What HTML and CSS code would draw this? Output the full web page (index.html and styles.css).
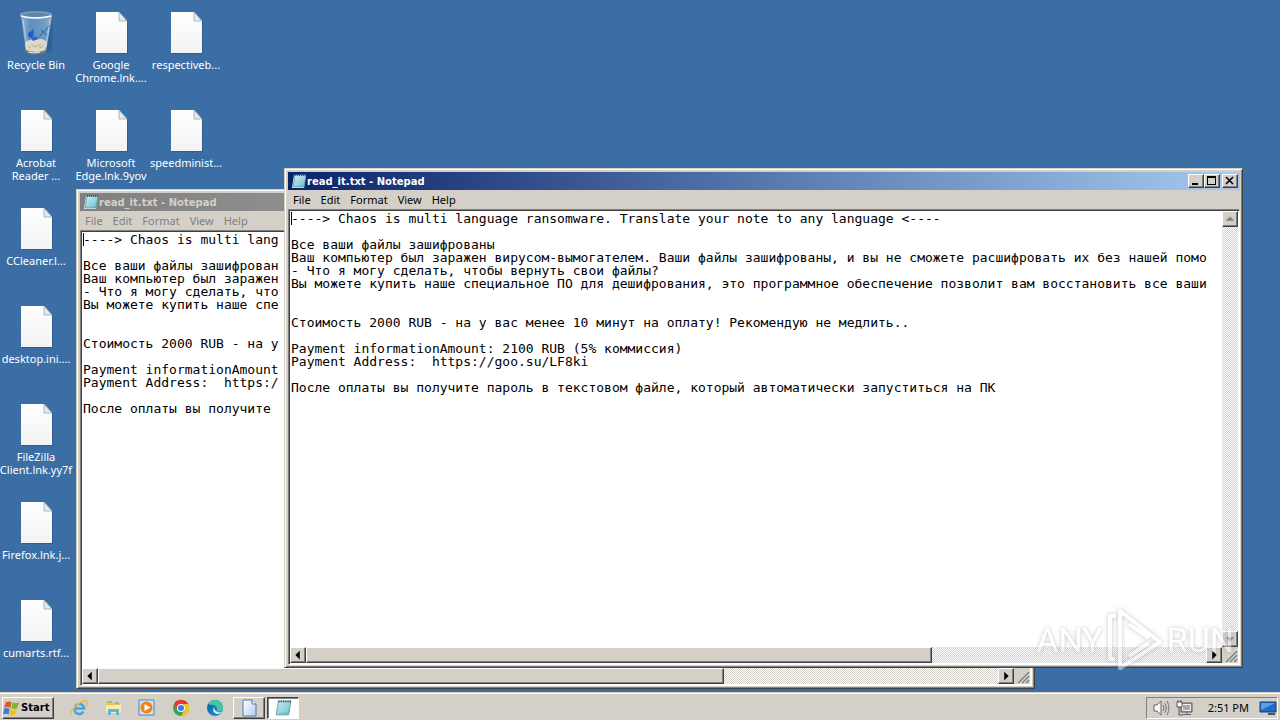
FILE: index.html
```html
<!DOCTYPE html>
<html lang="en">
<head>
<meta charset="utf-8">
<title>Desktop</title>
<link rel="stylesheet" href="styles.css">
</head>
<body>
<svg class="defs" aria-hidden="true">
  <defs>
    <linearGradient id="paper" x1="0" y1="0" x2="0" y2="1"><stop offset="0" stop-color="#fff"/><stop offset="1" stop-color="#f3f3f3"/></linearGradient>
    <linearGradient id="sheet" x1="0" y1="0" x2="1" y2="1"><stop offset="0" stop-color="#fff"/><stop offset="1" stop-color="#b4cdf0"/></linearGradient>
    <linearGradient id="pad" x1="0" y1="0" x2="1" y2="1"><stop offset="0" stop-color="#d9f3f6"/><stop offset="1" stop-color="#5fb3c4"/></linearGradient>
    <linearGradient id="edge" x1="0" y1="0" x2="1" y2="1"><stop offset="0" stop-color="#0c59a4"/><stop offset="1" stop-color="#1ba0d8"/></linearGradient>
    <linearGradient id="glass" x1="0" y1="0" x2="1" y2="0"><stop offset="0" stop-color="#b9cfe2" stop-opacity=".8"/><stop offset=".3" stop-color="#6f9cc9" stop-opacity=".7"/><stop offset=".8" stop-color="#7fa9d0" stop-opacity=".8"/><stop offset="1" stop-color="#a9bccb"/></linearGradient>
  </defs>
  <symbol id="file" viewBox="0 0 34 44">
    <path d="M3 2h23l8 9v32H3z" fill="#204a7a" opacity=".45"/>
    <path d="M2 1h23l8 9v32H2z" fill="url(#paper)"/>
    <path d="M25 1v9h8z" fill="#e6e9ec" stroke="#9aa7b4" stroke-width=".8"/>
  </symbol>
  <symbol id="notepad" viewBox="0 0 16 16">
    <path d="M3 2h12l-2 13H1z" fill="#eefafa"/>
    <path d="M4 2h11l-2 12H2z" fill="url(#pad)" stroke="#4e95a5" stroke-width=".7"/>
    <path d="M5 5h8M5 7h8M4 9h8M4 11h8" stroke="#a8dbe2" stroke-width=".7"/>
    <path d="M4 2h11" stroke="#465b60" stroke-width="2" stroke-dasharray="1 1"/>
  </symbol>
  <symbol id="left" viewBox="0 0 16 16"><path d="M10 3v10L5 8z"/></symbol>
  <symbol id="right" viewBox="0 0 16 16"><path d="M6 3v10l5-5z"/></symbol>
  <symbol id="up" viewBox="0 0 16 16"><path d="M3 10h10L8 5z"/></symbol>
  <symbol id="down" viewBox="0 0 16 16"><path d="M3 6h10l-5 5z"/></symbol>
  <symbol id="grip" viewBox="0 0 16 16">
    <path d="M3 15L15 3M7 15l8-8M11 15l4-4" stroke="#fff" stroke-width="1"/>
    <path d="M4 15L15 4M8 15l7-7M12 15l3-3" stroke="#808080" stroke-width="1.6"/>
  </symbol>
</svg>

<main class="desktop">
  <div class="icons">
    <div class="column">
      <div class="shortcut">
        <svg class="art" viewBox="3 3 34 44">
          <path d="M29 38l8-24-1 29-8 3z" fill="#24507f" opacity=".4"/>
          <path d="M5 7l5 37q10 4 20 0l6-37z" fill="url(#glass)"/>
          <path d="M9 35q4-5 10-3 9-3 12 3l-2 8q-9 5-19 0z" fill="#ded8c9"/>
          <path d="M15 36l4 3 6-3M12 38l3 2M23 40l5-2" stroke="#b5af9f" fill="none"/>
          <path d="M17 20q2 8-2 10-5-1-2-6 3 0 4-4z" fill="#1b5dcc"/>
          <path d="M15 30q6-4 7 1l-5 2z" fill="#2b66c4"/>
          <path d="M34 17L23 29M25 22l6 5" stroke="#4474a8" stroke-width="1.2" fill="none"/>
          <path d="M10 42q10 4 20 0v3q-10 3-20 0z" fill="#77746a"/>
          <path d="M12 44q7 2 12 0" stroke="#eee" fill="none"/>
          <ellipse cx="20" cy="7" rx="15.500" ry="3" fill="#5687b8" stroke="#8e9ca8" stroke-width="1.500"/>
          <path d="M5 8q14 4 30 0" stroke="#fff" stroke-width="1.5" fill="none"/>
          <path d="M7 12l4 28M34 12l-4 27" stroke="#d7e4ef" opacity=".6"/>
        </svg>
        <span class="label">Recycle Bin</span>
      </div>
      <div class="shortcut"><svg class="art"><use href="#file"/></svg><span class="label">Acrobat<br>Reader ...</span></div>
      <div class="shortcut"><svg class="art"><use href="#file"/></svg><span class="label">CCleaner.l...</span></div>
      <div class="shortcut"><svg class="art"><use href="#file"/></svg><span class="label">desktop.ini....</span></div>
      <div class="shortcut"><svg class="art"><use href="#file"/></svg><span class="label">FileZilla<br>Client.lnk.yy7f</span></div>
      <div class="shortcut"><svg class="art"><use href="#file"/></svg><span class="label">Firefox.lnk.j...</span></div>
      <div class="shortcut"><svg class="art"><use href="#file"/></svg><span class="label">cumarts.rtf...</span></div>
    </div>
    <div class="column">
      <div class="shortcut"><svg class="art"><use href="#file"/></svg><span class="label">Google<br>Chrome.lnk....</span></div>
      <div class="shortcut"><svg class="art"><use href="#file"/></svg><span class="label">Microsoft<br>Edge.lnk.9yov</span></div>
    </div>
    <div class="column">
      <div class="shortcut"><svg class="art"><use href="#file"/></svg><span class="label">respectiveb...</span></div>
      <div class="shortcut"><svg class="art"><use href="#file"/></svg><span class="label">speedminist...</span></div>
    </div>
  </div>

  <section class="window window-back" aria-hidden="true">
    <header class="titlebar">
      <svg class="icon16"><use href="#notepad"/></svg>
      <h2 class="title">read_it.txt - Notepad</h2>
    </header>
    <nav class="menu"><button>File</button><button>Edit</button><button>Format</button><button>View</button><button>Help</button></nav>
    <div class="editor">
      <div class="note">----&gt; Chaos is multi lang

Все ваши файлы зашифрован
Ваш компьютер был заражен
- Что я могу сделать, что
Вы можете купить наше спе


Стоимость 2000 RUB - на у

Payment informationAmount
Payment Address:  https:/

После оплаты вы получите</div>
      <div class="track-y"></div>
      <div class="track-x"><button class="arrow" aria-label="Scroll left"><svg><use href="#left"/></svg></button><span class="thumb"></span><button class="arrow" aria-label="Scroll right"><svg><use href="#right"/></svg></button></div>
      <svg class="corner"><use href="#grip"/></svg>
    </div>
  </section>

  <section class="window window-front">
    <header class="titlebar">
      <svg class="icon16"><use href="#notepad"/></svg>
      <h1 class="title">read_it.txt - Notepad</h1>
      <button class="ctl" aria-label="Minimize"><svg viewBox="0 0 12 10"><path d="M2 7h6v2H2z"/></svg></button>
      <button class="ctl" aria-label="Maximize"><svg viewBox="0 0 12 10"><path d="M1 0h9v9H1zM2 2v6h7V2z" fill-rule="evenodd"/></svg></button>
      <button class="ctl ctl-close" aria-label="Close"><svg viewBox="0 0 12 10"><path d="M2 1l7 7M9 1L2 8" stroke="#000" stroke-width="1.6"/></svg></button>
    </header>
    <nav class="menu"><button>File</button><button>Edit</button><button>Format</button><button>View</button><button>Help</button></nav>
    <div class="editor">
      <div class="note">----&gt; Chaos is multi language ransomware. Translate your note to any language &lt;----

Все ваши файлы зашифрованы
Ваш компьютер был заражен вирусом-вымогателем. Ваши файлы зашифрованы, и вы не сможете расшифровать их без нашей помо
- Что я могу сделать, чтобы вернуть свои файлы?
Вы можете купить наше специальное ПО для дешифрования, это программное обеспечение позволит вам восстановить все ваши


Стоимость 2000 RUB - на у вас менее 10 минут на оплату! Рекомендую не медлить..

Payment informationAmount: 2100 RUB (5% коммиссия)
Payment Address:  https://goo.su/LF8ki

После оплаты вы получите пароль в текстовом файле, который автоматически запуститься на ПК</div>
      <div class="track-y"><button class="arrow" disabled aria-label="Scroll up"><svg><use href="#up"/></svg></button><button class="arrow" disabled aria-label="Scroll down"><svg><use href="#down"/></svg></button></div>
      <div class="track-x"><button class="arrow" aria-label="Scroll left"><svg><use href="#left"/></svg></button><span class="thumb"></span><button class="arrow" aria-label="Scroll right"><svg><use href="#right"/></svg></button></div>
      <svg class="corner"><use href="#grip"/></svg>
    </div>
  </section>

  <div class="watermark">
    <span>ANY</span>
    <svg viewBox="0 0 56 64"><path d="M9 8H3v43h5M13 3v57l40-26zM22 16l20 14M22 48l20-13" fill="none" stroke="#fff" stroke-width="4" stroke-linejoin="round"/></svg>
    <span>RUN</span>
  </div>
</main>

<footer class="taskbar">
  <button class="start">
    <svg viewBox="0 0 18 16">
      <path d="M3 2q3-2 6 0L8 8Q5 6 1 8z" fill="#e8532a"/><path d="M10 2q3 2 7 0l-2 6q-3 2-6 0z" fill="#78b833"/>
      <path d="M1 9q3-2 6 0l-1 6q-3-2-6 0z" fill="#3a80d0"/><path d="M8 9q3 2 7 0l-2 6q-3 2-6 0z" fill="#f5bd27"/>
    </svg>Start</button>
  <nav class="launch">
    <button aria-label="Internet Explorer"><svg viewBox="0 0 18 18"><path d="M13.500 12.500q-2 3-5 2.500-4-1-4-5 1-5 5-5 4 0 4.500 4.500H6" fill="none" stroke="#42a8e4" stroke-width="2.600"/><path d="M2 16Q-1 13 6 7t11-5q2 2-2 7" fill="none" stroke="#edbd3a" stroke-width="1.500"/></svg></button>
    <button aria-label="Explorer"><svg viewBox="0 0 18 18"><path d="M2 4l1-2h5l1 2h7v10H2z" fill="#e8c65b"/><path d="M2 6h15v8H2z" fill="#faecab"/><path d="M4 3h4M11 4h4" stroke="#5aae61"/><path d="M4 16v-6h11v6h-3v-3H7v3z" fill="#64b5dd"/></svg></button>
    <button aria-label="Media Player"><svg viewBox="0 0 18 18"><path d="M1 1h15v15H1z" fill="#cfe3f5" stroke="#4e86b8"/><circle cx="8.5" cy="8.5" r="6" fill="#f08419"/><path d="M6.500 5v7l6-3.500z" fill="#fff"/></svg></button>
    <button aria-label="Chrome"><svg viewBox="0 0 18 18"><circle cx="9" cy="9" r="8" fill="#35a455"/><path d="M2 5a8 8 0 0 1 14 0H9L6 11z" fill="#e33b2e"/><path d="M16 5a8 8 0 0 1-7 12l4-7-1-5z" fill="#fbc116"/><circle cx="9" cy="9" r="4" fill="#fff"/><circle cx="9" cy="9" r="3" fill="#3b78e7"/></svg></button>
    <button aria-label="Edge"><svg viewBox="0 0 18 18"><circle cx="9" cy="9" r="8" fill="url(#edge)"/><path d="M2 5q5-7 12-2 4 4 3 8-3 3-6 1 1-5-4-6-3 0-5-1z" fill="#47c6a1"/><path d="M8 8q-3 5 3 7 3 0 5-2-4 1-6-1-2-1-2-4z" fill="#d4eef5"/></svg></button>
  </nav>
  <button class="task" aria-label="Document"><svg viewBox="0 0 18 18"><path d="M3 1h9l4 4v12H3z" fill="url(#sheet)" stroke="#5478ad"/><path d="M12 1v4h4" fill="#fff" stroke="#5478ad"/></svg></button>
  <button class="task task-active" aria-label="Notepad"><svg><use href="#notepad"/></svg></button>
  <div class="tray">
    <svg viewBox="0 0 18 18"><path d="M2 6h3l4-4v14l-4-4H2z" fill="#f8f8f8" stroke="#666"/><path d="M11 6q2 3 0 6M13 4q3 5 0 10M15 2q4 7 0 14" fill="none" stroke="#777"/></svg>
    <svg viewBox="0 0 18 18"><path d="M5 4h11v9H5z" fill="#aaa" stroke="#555"/><path d="M6.500 5.500h8v6h-8z" fill="none" stroke="#eee"/><path d="M7 15.500h8M11 13v2" stroke="#666"/><path d="M1 3h5v5H1zM2 1v2M5 1v2" fill="#fff" stroke="#555"/><path d="M3 8v8h4" fill="none" stroke="#555"/></svg>
    <time>2:51 PM</time>
    <svg viewBox="0 0 18 18"><path d="M1 3h16v10H1z" fill="#2468c8" stroke="#174076"/><path d="M2 4h14L2 11z" fill="#5aa0ec"/><path d="M9 15h7" stroke="#456" stroke-width="2"/></svg>
  </div>
</footer>
</body>
</html>
```
FILE: styles.css
```css
* { box-sizing: border-box; }

body {
  margin: 0;
  height: 100vh;
  display: flex;
  flex-direction: column;
  overflow: hidden;
  background: #3a6ea5;
  font: 11px/13px "Noto Sans", sans-serif;
  color: #000;
}

button {
  margin: 0;
  padding: 0;
  border: 0;
  background: none;
  font: inherit;
  color: inherit;
}

.defs { position: absolute; width: 0; height: 0; }

.desktop { flex: 1; position: relative; min-height: 0; }

.icons { display: flex; gap: 3px; }
.column { width: 72px; }
.shortcut {
  height: 98px;
  padding-top: 11px;
  display: flex;
  flex-direction: column;
  align-items: center;
  gap: 3px;
}
.art { width: 34px; height: 44px; flex: none; }
.label { color: #fff; text-align: center; white-space: nowrap; }

.window {
  position: absolute;
  width: 959px;
  height: 500px;
  padding: 3px 2px 2px 3px;
  display: flex;
  flex-direction: column;
  background: #d4d0c8;
  border: 1px solid;
  border-color: #d4d0c8 #404040 #404040 #d4d0c8;
  box-shadow: inset 1px 1px #fff, inset -1px -1px #808080;
}
.window-back { left: 76px; top: 189px; }
.window-front { left: 284px; top: 168px; }

.titlebar {
  height: 18px;
  padding: 0 2px 0 3px;
  display: flex;
  align-items: center;
  background: linear-gradient(90deg, #0a246a, #a6caf0);
  color: #fff;
}
.window-back .titlebar { background: linear-gradient(90deg, #808080, #c0c0c0); color: #d4d0c8; }
.icon16 { width: 16px; height: 16px; }
.title { flex: 1; margin: 0; font: bold 10px/13px "DejaVu Sans", sans-serif; }

.ctl {
  width: 16px;
  height: 14px;
  display: grid;
  place-items: center;
}
.ctl svg { width: 12px; height: 10px; }
.ctl-close { margin-left: 2px; }
.ctl, .arrow, .thumb, .start, .task {
  background: #d4d0c8;
  border: 1px solid;
  border-color: #fff #404040 #404040 #fff;
  box-shadow: inset -1px -1px #808080;
}

.menu { height: 19px; padding: 0 5px 1px; display: flex; align-items: center; gap: 10px; }
.window-back .menu { color: #808080; }

.editor {
  flex: 1;
  min-height: 0;
  display: grid;
  grid-template-columns: 1fr 16px;
  grid-template-rows: 1fr 16px;
  border: 1px solid;
  border-color: #808080 #fff #fff #808080;
  box-shadow: inset 1px 1px #404040;
  padding: 1px;
  background: #fff;
}
.note {
  min-width: 0;
  padding: 1px;
  overflow: hidden;
  white-space: pre;
  font: 13px/13px "DejaVu Sans Mono", monospace;
  background: linear-gradient(#000, #000) 1px 1px / 1px 13px no-repeat;
}
.track-x, .track-y { display: flex; background: repeating-conic-gradient(#fff 0 25%, #d4d0c8 0 50%) 0 0 / 2px 2px; }
.track-y { flex-direction: column; justify-content: space-between; }
.window-back .track-y { background: #fff; }
.thumb { width: 626px; margin-right: auto; }
.arrow { width: 16px; height: 16px; flex: none; }
.arrow svg { display: block; width: 14px; height: 14px; }
.arrow:disabled { fill: #808080; }
.corner { width: 16px; height: 16px; background: #d4d0c8; }

.watermark {
  position: absolute;
  right: 46px;
  bottom: 20px;
  display: flex;
  align-items: center;
  gap: 4px;
  color: #fff;
  font: 34px/44px Roboto, sans-serif;
  opacity: .5;
  filter: drop-shadow(0 0 2px #888);
}
.watermark svg { width: 56px; height: 64px; }

.taskbar {
  height: 28px;
  padding: 3px 2px 1px;
  display: flex;
  align-items: center;
  background: #d4d0c8;
  border-top: 1px solid #d4d0c8;
  box-shadow: inset 0 1px #fff;
}
.start {
  width: 52px;
  height: 22px;
  display: flex;
  align-items: center;
  gap: 1px;
  font: bold 10px/13px "DejaVu Sans", sans-serif;
}
.start svg { width: 17px; height: 16px; flex: none; }
.launch { display: flex; gap: 16px; padding: 0 9px 0 16px; }
.launch svg, .task svg { display: block; width: 18px; height: 18px; }
.task { width: 32px; height: 22px; display: grid; place-items: center; }
.task-active {
  margin-left: 2px;
  background: #fff;
  border-color: #404040 #fff #fff #404040;
  box-shadow: inset 1px 1px #808080;
}
.tray {
  height: 22px;
  margin-left: auto;
  padding: 0 0 0 5px;
  display: flex;
  align-items: center;
  gap: 6px;
  border: 1px solid;
  border-color: #808080 #fff #fff #808080;
}
.tray svg { width: 18px; height: 18px; }
.tray time { padding: 0 4px 0 8px; }
```
